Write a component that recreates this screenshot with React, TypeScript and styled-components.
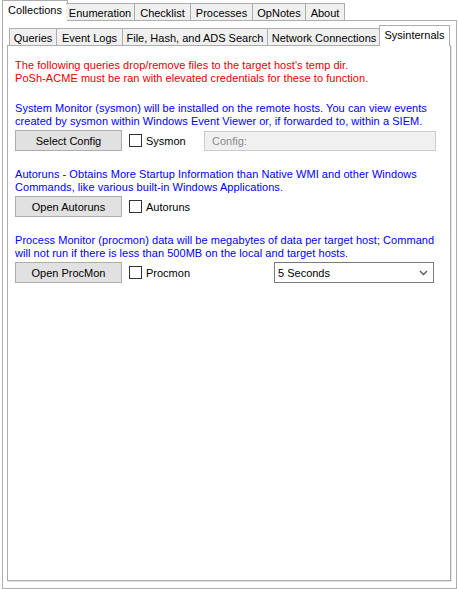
import React from "react";
import styled, { createGlobalStyle } from "styled-components";

const Global = createGlobalStyle`
  html, body { margin: 0; padding: 0; background: #ffffff; }
  body { font-family: "Liberation Sans", Arial, sans-serif; font-size: 11px; color: #000; }
  * { box-sizing: border-box; }
`;

const Window = styled.div`
  width: 458px;
  height: 589px;
  display: flex;
  flex-direction: column;
  padding: 0 1px 0 2px;
  background: #ffffff;
`;

const TabStrip = styled.div<{ $inset: number; $height: number }>`
  display: flex;
  align-items: flex-end;
  height: ${(p) => p.$height}px;
  padding-left: ${(p) => p.$inset}px;
  position: relative;
  z-index: 1;
`;

const Tab = styled.div<{ $active?: boolean; $w: number }>`
  width: ${(p) => p.$w}px;
  height: ${(p) => (p.$active ? 21 : 17)}px;
  margin-bottom: ${(p) => (p.$active ? -1 : 0)}px;
  margin-left: ${(p) => (p.$active ? -2 : 0)}px;
  margin-right: ${(p) => (p.$active ? -2 : 0)}px;
  border: 1px solid #adadad;
  border-left-width: ${(p) => (p.$active ? 1 : 0)}px;
  border-bottom: none;
  background: ${(p) => (p.$active ? "#ffffff" : "#f0f0f0")};
  display: flex;
  align-items: center;
  justify-content: center;
  padding-top: ${(p) => (p.$active ? 0 : 1)}px;
  padding-bottom: ${(p) => (p.$active ? 3 : 0)}px;
  font-size: 11px;
  white-space: nowrap;
  &:first-child { border-left-width: 1px; }
`;

const Panel = styled.div<{ $shadow?: boolean }>`
  flex: 1;
  display: flex;
  flex-direction: column;
  border: 1px solid #adadad;
  background: #ffffff;
  box-shadow: ${(p) => (p.$shadow ? "1px 1px 0 #e3e3e3" : "none")};
`;

const OuterBody = styled.div`
  flex: 1;
  display: flex;
  flex-direction: column;
  padding: 4px 5px 7px 4px;
`;

const Content = styled.div`
  flex: 1;
  display: flex;
  flex-direction: column;
  padding: 13px 8px 0 7px;
`;

const Note = styled.p<{ $color: string }>`
  margin: 0;
  color: ${(p) => p.$color};
  line-height: 13px;
  font-size: 11px;
  letter-spacing: 0.05px;
`;

const Section = styled.div`
  display: flex;
  flex-direction: column;
  margin-top: 17px;
`;

const Row = styled.div`
  display: flex;
  align-items: center;
  margin-top: 2px;
  height: 21px;
`;

const Button = styled.button`
  width: 107px;
  height: 21px;
  background: #e1e1e1;
  border: 1px solid #adadad;
  font-family: "Liberation Sans", Arial, sans-serif;
  font-size: 11px;
  color: #000;
  padding: 0;
  margin: 0;
`;

const CheckLabel = styled.label`
  width: 75px;
  display: flex;
  align-items: center;
  margin-left: 7px;
  gap: 4px;
  font-size: 11px;
`;

const Box = styled.span`
  width: 13px;
  height: 13px;
  border: 1px solid #333333;
  background: #ffffff;
  display: inline-block;
`;

const TextField = styled.div`
  width: 232px;
  height: 20px;
  background: #f0f0f0;
  border: 1px solid #cccccc;
  color: #8a8a8a;
  display: flex;
  align-items: center;
  padding-left: 7px;
  font-size: 11px;
`;

const Combo = styled.div`
  margin-left: 70px;
  width: 160px;
  height: 21px;
  background: #ffffff;
  border: 1px solid #7a7a7a;
  display: flex;
  align-items: center;
  justify-content: space-between;
  padding: 0 5px 0 3px;
  font-size: 11px;
`;

const Chevron = () => (
  <svg width="9" height="6" viewBox="0 0 9 6">
    <path d="M1 1 L4.5 4.5 L8 1" fill="none" stroke="#5a5a5a" strokeWidth="1.4" />
  </svg>
);

const outerTabs: [string, number][] = [
  ["Collections", 66],
  ["Enumeration", 69],
  ["Checklist", 56],
  ["Processes", 62],
  ["OpNotes", 53],
  ["About", 39],
];

const innerTabs: [string, number][] = [
  ["Queries", 48],
  ["Event Logs", 66],
  ["File, Hash, and ADS Search", 145],
  ["Network Connections", 113],
  ["Sysinternals", 71],
];

export default function App() {
  return (
    <Window>
      <Global />
      <TabStrip $inset={2} $height={20}>
        {outerTabs.map(([t, w], i) => (
          <Tab key={t} $w={w} $active={i === 0}>
            {t}
          </Tab>
        ))}
      </TabStrip>
      <Panel>
        <OuterBody>
          <TabStrip $inset={2} $height={20}>
            {innerTabs.map(([t, w], i) => (
              <Tab key={t} $w={w} $active={i === 4}>
                {t}
              </Tab>
            ))}
          </TabStrip>
          <Panel $shadow>
            <Content>
              <Note $color="#e60000">
                The following queries drop/remove files to the target host's temp dir.
                <br />
                PoSh-ACME must be ran with elevated credentials for these to function.
              </Note>
              <Section>
                <Note $color="#0000ff">
                  System Monitor (sysmon) will be installed on the remote hosts. You can view events
                  created by sysmon within Windows Event Viewer or, if forwarded to, within a SIEM.
                </Note>
                <Row>
                  <Button>Select Config</Button>
                  <CheckLabel>
                    <Box />
                    Sysmon
                  </CheckLabel>
                  <TextField>Config:</TextField>
                </Row>
              </Section>
              <Section>
                <Note $color="#0000ff">
                  Autoruns - Obtains More Startup Information than Native WMI and other Windows
                  <br />
                  Commands, like various built-in Windows Applications.
                </Note>
                <Row>
                  <Button>Open Autoruns</Button>
                  <CheckLabel>
                    <Box />
                    Autoruns
                  </CheckLabel>
                </Row>
              </Section>
              <Section>
                <Note $color="#0000ff">
                  Process Monitor (procmon) data will be megabytes of data per target host; Command
                  <br />
                  will not run if there is less than 500MB on the local and target hosts.
                </Note>
                <Row>
                  <Button>Open ProcMon</Button>
                  <CheckLabel>
                    <Box />
                    Procmon
                  </CheckLabel>
                  <Combo>
                    5 Seconds
                    <Chevron />
                  </Combo>
                </Row>
              </Section>
            </Content>
          </Panel>
        </OuterBody>
      </Panel>
    </Window>
  );
}
